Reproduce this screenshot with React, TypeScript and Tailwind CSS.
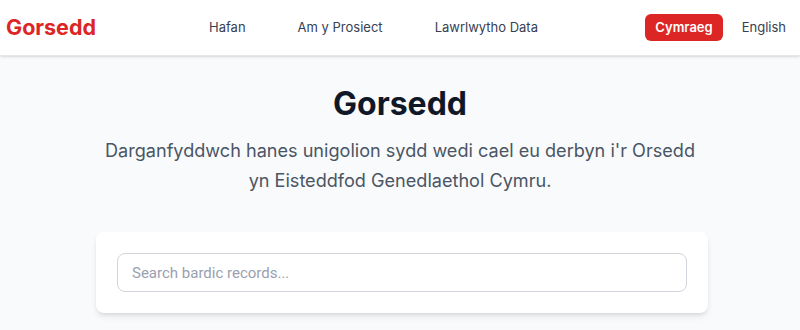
export default function App() {
  return (
    <div className="min-h-[330px] bg-[#f9fafb] font-['Inter',sans-serif]">
      <header className="flex h-[56px] items-center border-b border-gray-200 bg-white pl-[6px] pr-[14px] shadow-sm">
        <span className="text-[21.5px] font-bold text-[#dc2626]">Gorsedd</span>
        <nav className="ml-[113px] flex gap-[52px] text-[13px] text-gray-700">
          <a>Hafan</a>
          <a>Am y Prosiect</a>
          <a>Lawrlwytho Data</a>
        </nav>
        <div className="ml-auto flex items-center gap-[19px] text-[13px]">
          <button className="rounded-md bg-[#dc2626] px-[10px] py-[4px] font-semibold text-white">Cymraeg</button>
          <button className="text-gray-700">English</button>
        </div>
      </header>
      <main className="flex flex-col items-center pt-[24px]">
        <h1 className="text-[32px] leading-[48px] font-bold text-gray-900">Gorsedd</h1>
        <p className="mt-[7px] max-w-[606px] text-center text-[18.1px] leading-[30px] text-gray-600">
          Darganfyddwch hanes unigolion sydd wedi cael eu derbyn i'r Orsedd yn Eisteddfod Genedlaethol Cymru.
        </p>
        <div className="mt-[37px] ml-[4px] w-[612px] rounded-lg bg-white p-[21px] shadow-md">
          <input
            className="h-[39px] w-full rounded-lg border border-gray-300 px-[14px] font-['Roboto',sans-serif] text-[15px] outline-none placeholder:text-gray-400"
            placeholder="Search bardic records..."
          />
        </div>
      </main>
    </div>
  );
}
